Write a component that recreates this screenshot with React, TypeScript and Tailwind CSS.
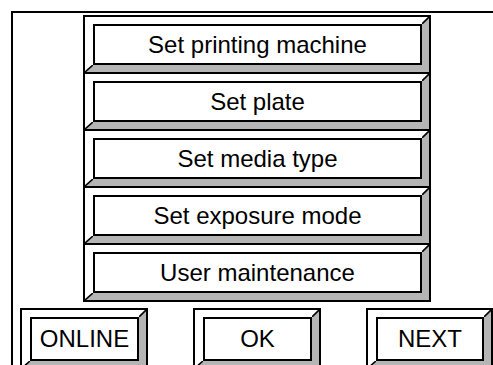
import React from "react";

type BevelProps = {
  label: string;
  className?: string;
};

const BevelButton = ({ label, className = "" }: BevelProps) => {
  return (
    <div className={`border-2 border-black bg-white ${className}`}>
      <div className="relative h-full border-t-[7px] border-l-[8px] border-r-[7px] border-b-[7px] border-t-white border-l-white border-r-[#b5b5b5] border-b-[#b5b5b5]">
        {/* the two black mitre lines where white meets grey */}
        <svg className="absolute -top-[7px] -right-[7px] w-[7px] h-[7px]" viewBox="0 0 7 7">
          <line x1="7.5" y1="-0.5" x2="-0.5" y2="7.5" stroke="black" strokeWidth="1.6" />
        </svg>
        <svg className="absolute -bottom-[7px] -left-[8px] w-[8px] h-[7px]" viewBox="0 0 8 7">
          <line x1="-0.5" y1="7.5" x2="8.5" y2="-0.5" stroke="black" strokeWidth="1.6" />
        </svg>
        <div className="h-full border-2 border-black bg-white flex items-center justify-center text-black">
          {label}
        </div>
      </div>
    </div>
  );
};

const menu = [
  "Set printing machine",
  "Set plate",
  "Set media type",
  "Set exposure mode",
  "User maintenance",
];

export default function App() {
  return (
    <div className="w-[493px] h-[365px] overflow-hidden bg-white font-['Liberation_Sans',Arial,sans-serif] text-[24px] leading-none">
      <div className="ml-[11px] mt-[11px] h-[354px] border-t-2 border-l-2 border-black">
        <div className="ml-[70px] mt-[2px] w-[348px] flex flex-col">
          {menu.map((m, i) => (
            <BevelButton key={m} label={m} className={`h-[59px] ${i > 0 ? "-mt-[2px]" : ""}`} />
          ))}
        </div>
        <div className="ml-[7px] mt-[6px] w-[473px] flex justify-between">
          <BevelButton label="ONLINE" className="w-[128px] h-[62px] shrink-0" />
          <BevelButton label="OK" className="w-[128px] h-[62px] shrink-0" />
          <BevelButton label="NEXT" className="w-[127px] h-[62px] shrink-0" />
        </div>
      </div>
    </div>
  );
}
